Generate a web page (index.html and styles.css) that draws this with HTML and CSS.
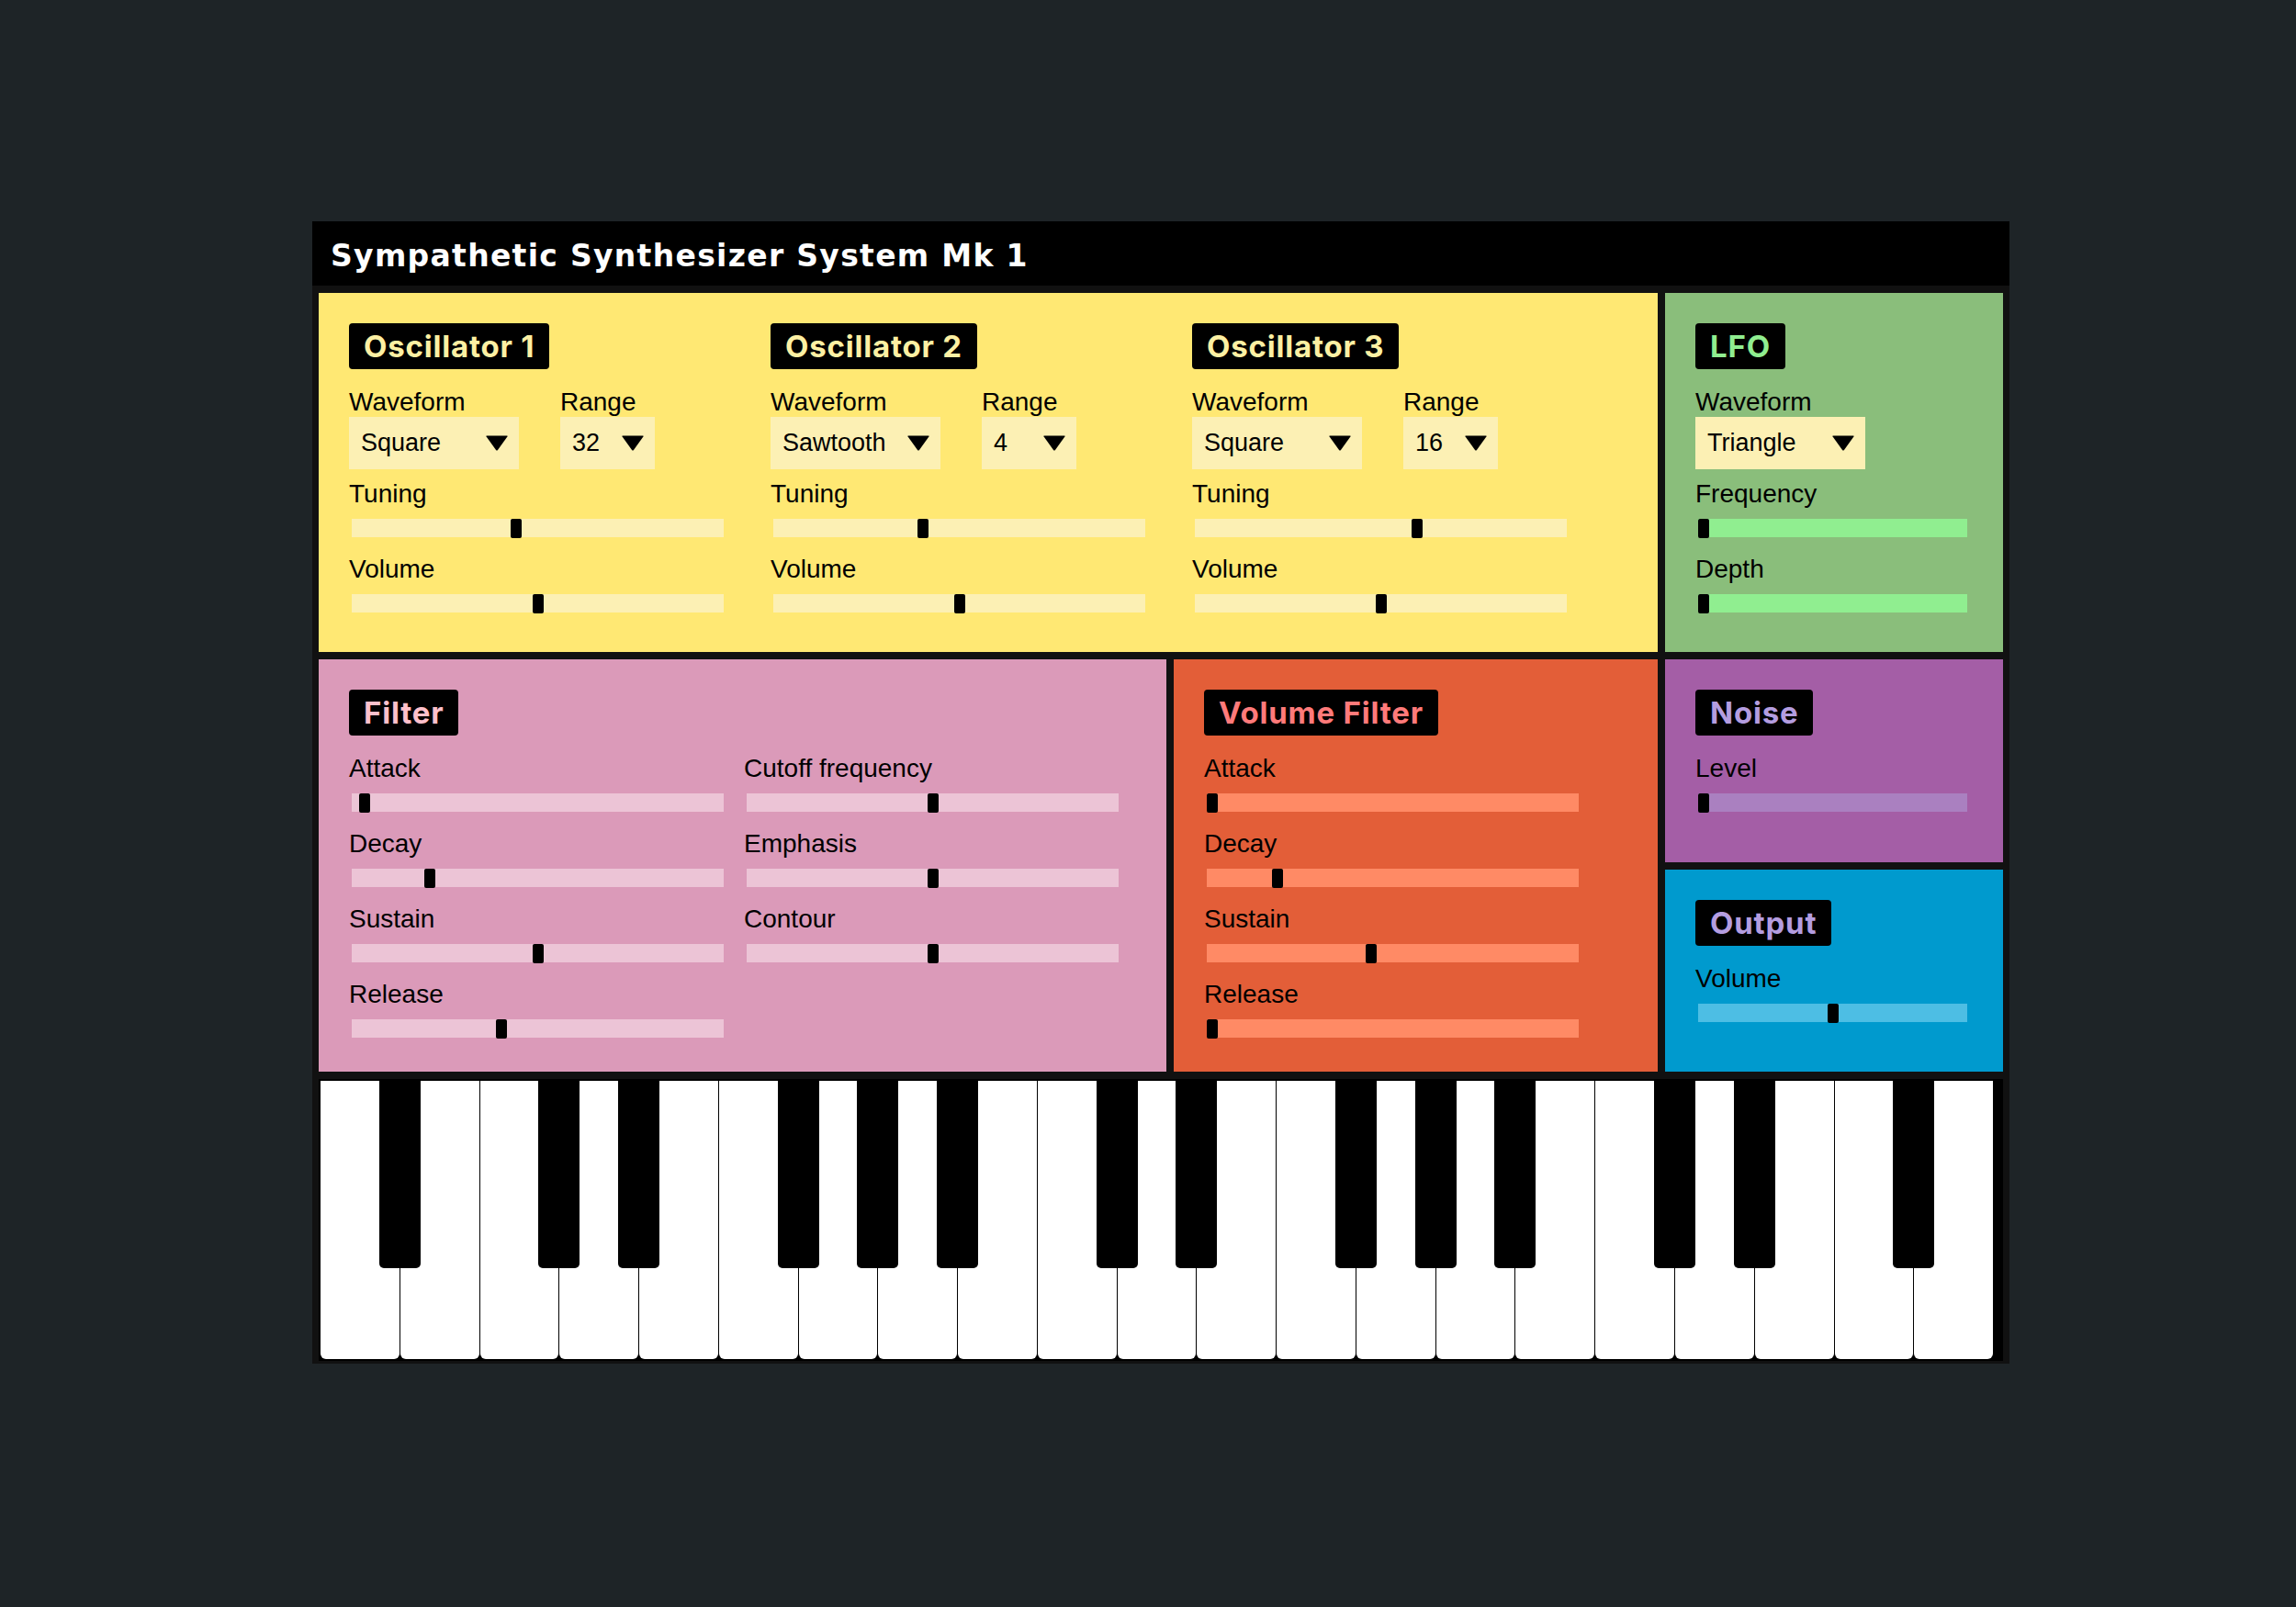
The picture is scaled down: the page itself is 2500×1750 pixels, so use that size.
FILE: index.html
```html
<!DOCTYPE html>
<html lang="en">
<head>
<meta charset="utf-8">
<title>Sympathetic Synthesizer System Mk 1</title>
<link rel="stylesheet" href="styles.css">
</head>
<body>
<div class="synth">
  <header class="titlebar">Sympathetic Synthesizer System Mk 1</header>
  <div class="body">
    <div class="rack">
      <section class="panel osc-panel">
        <div class="col osc">
          <h2 class="tag">Oscillator 1</h2>
          <div class="selects">
            <div class="field"><label>Waveform</label><div class="select wide"><span>Square</span><svg class="arrow" viewBox="0 0 24 17"><path d="M1 0.5H23Q24 0.5 23.4 1.4L12.8 16.2Q12 17 11.2 16.2L0.6 1.4Q0 0.5 1 0.5Z"/></svg></div></div>
            <div class="field"><label>Range</label><div class="select narrow"><span>32</span><svg class="arrow" viewBox="0 0 24 17"><path d="M1 0.5H23Q24 0.5 23.4 1.4L12.8 16.2Q12 17 11.2 16.2L0.6 1.4Q0 0.5 1 0.5Z"/></svg></div></div>
          </div>
          <label>Tuning</label><input class="slider" type="range" min="0" max="100" step="0.1" value="44">
          <label>Volume</label><input class="slider" type="range" min="0" max="100" step="0.1" value="50">
        </div>
        <div class="col osc">
          <h2 class="tag">Oscillator 2</h2>
          <div class="selects">
            <div class="field"><label>Waveform</label><div class="select wide"><span>Sawtooth</span><svg class="arrow" viewBox="0 0 24 17"><path d="M1 0.5H23Q24 0.5 23.4 1.4L12.8 16.2Q12 17 11.2 16.2L0.6 1.4Q0 0.5 1 0.5Z"/></svg></div></div>
            <div class="field"><label>Range</label><div class="select narrow"><span>4</span><svg class="arrow" viewBox="0 0 24 17"><path d="M1 0.5H23Q24 0.5 23.4 1.4L12.8 16.2Q12 17 11.2 16.2L0.6 1.4Q0 0.5 1 0.5Z"/></svg></div></div>
          </div>
          <label>Tuning</label><input class="slider" type="range" min="0" max="100" step="0.1" value="40">
          <label>Volume</label><input class="slider" type="range" min="0" max="100" step="0.1" value="50">
        </div>
        <div class="col osc">
          <h2 class="tag">Oscillator 3</h2>
          <div class="selects">
            <div class="field"><label>Waveform</label><div class="select wide"><span>Square</span><svg class="arrow" viewBox="0 0 24 17"><path d="M1 0.5H23Q24 0.5 23.4 1.4L12.8 16.2Q12 17 11.2 16.2L0.6 1.4Q0 0.5 1 0.5Z"/></svg></div></div>
            <div class="field"><label>Range</label><div class="select narrow"><span>16</span><svg class="arrow" viewBox="0 0 24 17"><path d="M1 0.5H23Q24 0.5 23.4 1.4L12.8 16.2Q12 17 11.2 16.2L0.6 1.4Q0 0.5 1 0.5Z"/></svg></div></div>
          </div>
          <label>Tuning</label><input class="slider" type="range" min="0" max="100" step="0.1" value="60">
          <label>Volume</label><input class="slider" type="range" min="0" max="100" step="0.1" value="50">
        </div>
      </section>

      <section class="panel lfo">
        <h2 class="tag">LFO</h2>
        <div class="field"><label>Waveform</label><div class="select wide"><span>Triangle</span><svg class="arrow" viewBox="0 0 24 17"><path d="M1 0.5H23Q24 0.5 23.4 1.4L12.8 16.2Q12 17 11.2 16.2L0.6 1.4Q0 0.5 1 0.5Z"/></svg></div></div>
        <label>Frequency</label><input class="slider short" type="range" min="0" max="100" step="0.1" value="0">
        <label>Depth</label><input class="slider short" type="range" min="0" max="100" step="0.1" value="0">
      </section>

      <section class="panel filter">
        <h2 class="tag">Filter</h2>
        <div class="cols">
          <div class="col">
            <label>Attack</label><input class="slider" type="range" min="0" max="100" step="0.1" value="2">
            <label>Decay</label><input class="slider" type="range" min="0" max="100" step="0.1" value="20">
            <label>Sustain</label><input class="slider" type="range" min="0" max="100" step="0.1" value="50">
            <label>Release</label><input class="slider" type="range" min="0" max="100" step="0.1" value="40">
          </div>
          <div class="col">
            <label>Cutoff frequency</label><input class="slider" type="range" min="0" max="100" step="0.1" value="50">
            <label>Emphasis</label><input class="slider" type="range" min="0" max="100" step="0.1" value="50">
            <label>Contour</label><input class="slider" type="range" min="0" max="100" step="0.1" value="50">
          </div>
        </div>
      </section>

      <section class="panel vfilter">
        <h2 class="tag">Volume Filter</h2>
        <label>Attack</label><input class="slider" type="range" min="0" max="100" step="0.1" value="0">
        <label>Decay</label><input class="slider" type="range" min="0" max="100" step="0.1" value="18">
        <label>Sustain</label><input class="slider" type="range" min="0" max="100" step="0.1" value="44">
        <label>Release</label><input class="slider" type="range" min="0" max="100" step="0.1" value="0">
      </section>

      <section class="panel noise">
        <h2 class="tag">Noise</h2>
        <label>Level</label><input class="slider short" type="range" min="0" max="100" step="0.1" value="0">
      </section>

      <section class="panel output">
        <h2 class="tag">Output</h2>
        <label>Volume</label><input class="slider short" type="range" min="0" max="100" step="0.1" value="50">
      </section>
    </div>

    <div class="keyboard">
      <div class="keys">
        <div class="white"><div class="black"></div></div>
        <div class="white"></div>
        <div class="white"><div class="black"></div></div>
        <div class="white"><div class="black"></div></div>
        <div class="white"></div>
        <div class="white"><div class="black"></div></div>
        <div class="white"><div class="black"></div></div>
        <div class="white"><div class="black"></div></div>
        <div class="white"></div>
        <div class="white"><div class="black"></div></div>
        <div class="white"><div class="black"></div></div>
        <div class="white"></div>
        <div class="white"><div class="black"></div></div>
        <div class="white"><div class="black"></div></div>
        <div class="white"><div class="black"></div></div>
        <div class="white"></div>
        <div class="white"><div class="black"></div></div>
        <div class="white"><div class="black"></div></div>
        <div class="white"></div>
        <div class="white"><div class="black"></div></div>
        <div class="white"></div>
      </div>
    </div>
  </div>
</div>
</body>
</html>
```

FILE: styles.css
```css
* { box-sizing: border-box; }

html, body {
  margin: 0;
}

body {
  background: #1e2427;
  min-height: 1750px;
  padding: 241px 0 0 340px;
  font-family: "Liberation Sans", Arial, sans-serif;
  color: #000;
}

.synth {
  width: 1848px;
  background: #111;
}

.titlebar {
  height: 70px;
  background: #000;
  color: #fff;
  padding-left: 20px;
  font-family: "DejaVu Sans", Inter, sans-serif;
  font-weight: 700;
  font-size: 33px;
  letter-spacing: 1.3px;
  line-height: 75px;
  overflow: hidden;
  white-space: nowrap;
}

.body {
  padding: 8px 7px 3px;
}

.rack {
  display: grid;
  grid-template-columns: 923px 527px 368px;
  grid-template-rows: 391px 221px 220px;
  gap: 8px;
}

.panel {
  padding: 33px;
}

.osc-panel {
  grid-column: 1 / 3;
  grid-row: 1;
  display: flex;
  gap: 49px;
  background: #ffe873;
  --track: #fcf0b4;
  --tag: #fdf0a3;
}

.lfo {
  grid-column: 3;
  grid-row: 1;
  background: #8abe7b;
  --track: #90ee90;
  --tag: #90ee90;
}

.filter {
  grid-column: 1;
  grid-row: 2 / 4;
  background: #db9ab9;
  --track: #ecc4d6;
  --tag: #ffc0cb;
}

.vfilter {
  grid-column: 2;
  grid-row: 2 / 4;
  background: #e35e38;
  --track: #ff8a65;
  --tag: #ff7a7a;
}

.noise {
  grid-column: 3;
  grid-row: 2;
  background: #a45ea6;
  --track: #aa80c0;
  --tag: #b49de0;
}

.output {
  grid-column: 3;
  grid-row: 3;
  background: #009ace;
  --track: #4dbee4;
  --tag: #b49de0;
}

.col {
  width: 410px;
  display: flex;
  flex-direction: column;
  align-items: flex-start;
}

.panel > label,
.col > label,
.field > label {
  display: block;
}

.cols {
  display: flex;
  gap: 20px;
}

.tag {
  display: inline-block;
  margin: 0 0 20px;
  height: 50px;
  padding: 0 16px;
  background: #000;
  color: var(--tag);
  border-radius: 4px;
  font-family: Inter, "Noto Sans", sans-serif;
  font-weight: 700;
  font-size: 33px;
  letter-spacing: 0.8px;
  line-height: 50px;
  white-space: nowrap;
}

label {
  font-size: 28px;
  line-height: 32px;
  white-space: nowrap;
}

.selects {
  display: flex;
  gap: 45px;
}

.field {
  margin-bottom: 11px;
}

.select {
  height: 57px;
  display: flex;
  align-items: center;
  justify-content: space-between;
  padding: 0 12px 0 13px;
  background: #fcf0b4;
  font-size: 27px;
}

.select.wide { width: 185px; }
.select.narrow { width: 103px; }

.arrow {
  width: 24px;
  height: 17px;
  fill: #000;
  flex: none;
}

.slider {
  -webkit-appearance: none;
  appearance: none;
  display: block;
  width: 405px;
  height: 20px;
  margin: 11px 0 19px 3px;
  padding: 0;
  border: 0;
  background: var(--track);
  outline: none;
}

.slider.short {
  width: 293px;
}

.slider::-webkit-slider-runnable-track {
  height: 20px;
  background: var(--track);
  border: 0;
}

.slider::-webkit-slider-thumb {
  -webkit-appearance: none;
  appearance: none;
  width: 12px;
  height: 21px;
  margin-top: -0.5px;
  background: #000;
  border: 0;
  border-radius: 2px;
}

.keyboard {
  margin-top: 8px;
  background: #000;
  padding: 2px;
}

.keys {
  width: 1821px;
  height: 303px;
  display: flex;
  gap: 1px;
}

.white {
  flex: 1;
  position: relative;
  background: #fff;
  border-radius: 0 0 6px 6px;
}

.black {
  position: absolute;
  top: 0;
  right: -23px;
  width: 45px;
  height: 204px;
  background: #000;
  border-radius: 0 0 5px 5px;
  z-index: 1;
}
```
